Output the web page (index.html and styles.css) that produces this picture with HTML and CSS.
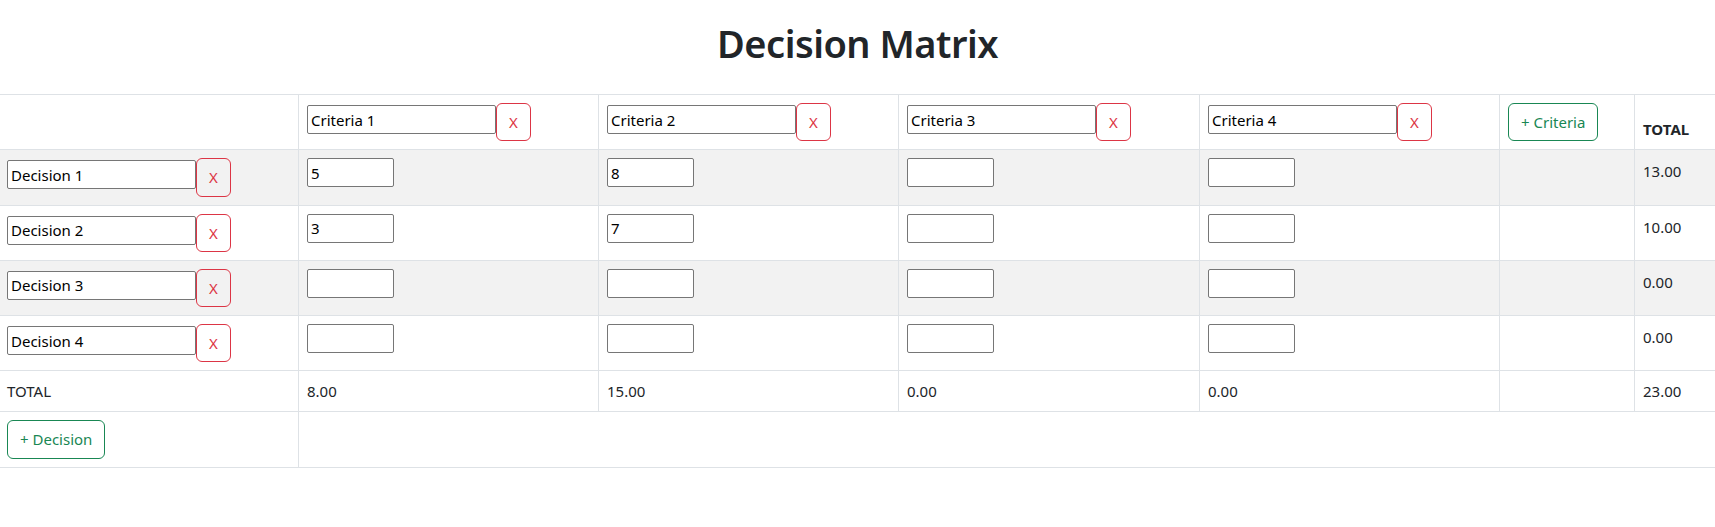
FILE: index.html
```html
<!DOCTYPE html>
<html lang="en">
<head>
<meta charset="utf-8">
<title>Decision Matrix</title>
<link rel="stylesheet" href="styles.css">
</head>
<body>
<h1 class="title">Decision Matrix</h1>
<table class="matrix">
  <colgroup>
    <col class="c-label">
    <col class="c-crit">
    <col class="c-crit">
    <col class="c-crit3">
    <col class="c-crit">
    <col class="c-add">
    <col class="c-total">
  </colgroup>
  <thead>
    <tr>
      <th></th>
      <th><div class="pair"><input class="field name" value="Criteria 1"><button class="btn btn-del">X</button></div></th>
      <th><div class="pair"><input class="field name" value="Criteria 2"><button class="btn btn-del">X</button></div></th>
      <th><div class="pair"><input class="field name" value="Criteria 3"><button class="btn btn-del">X</button></div></th>
      <th><div class="pair"><input class="field name" value="Criteria 4"><button class="btn btn-del">X</button></div></th>
      <th><button class="btn btn-add">+ Criteria</button></th>
      <th class="total-head">TOTAL</th>
    </tr>
  </thead>
  <tbody class="decisions">
    <tr>
      <td><div class="pair"><input class="field name" value="Decision 1"><button class="btn btn-del">X</button></div></td>
      <td><input class="field score" value="5"></td>
      <td><input class="field score" value="8"></td>
      <td><input class="field score" value=""></td>
      <td><input class="field score" value=""></td>
      <td></td>
      <td class="num">13.00</td>
    </tr>
    <tr>
      <td><div class="pair"><input class="field name" value="Decision 2"><button class="btn btn-del">X</button></div></td>
      <td><input class="field score" value="3"></td>
      <td><input class="field score" value="7"></td>
      <td><input class="field score" value=""></td>
      <td><input class="field score" value=""></td>
      <td></td>
      <td class="num">10.00</td>
    </tr>
    <tr>
      <td><div class="pair"><input class="field name" value="Decision 3"><button class="btn btn-del">X</button></div></td>
      <td><input class="field score" value=""></td>
      <td><input class="field score" value=""></td>
      <td><input class="field score" value=""></td>
      <td><input class="field score" value=""></td>
      <td></td>
      <td class="num">0.00</td>
    </tr>
    <tr>
      <td><div class="pair"><input class="field name" value="Decision 4"><button class="btn btn-del">X</button></div></td>
      <td><input class="field score" value=""></td>
      <td><input class="field score" value=""></td>
      <td><input class="field score" value=""></td>
      <td><input class="field score" value=""></td>
      <td></td>
      <td class="num">0.00</td>
    </tr>
  </tbody>
  <tfoot>
    <tr>
      <td>TOTAL</td>
      <td>8.00</td>
      <td>15.00</td>
      <td>0.00</td>
      <td>0.00</td>
      <td></td>
      <td>23.00</td>
    </tr>
    <tr>
      <td><button class="btn btn-add">+ Decision</button></td>
      <td colspan="6"></td>
    </tr>
  </tfoot>
</table>
</body>
</html>
```

FILE: styles.css
```css
* {
  box-sizing: border-box;
}

body {
  margin: 0;
  font-family: "Noto Sans", "Open Sans", sans-serif;
  font-size: 15px;
  line-height: 24px;
  color: #212529;
  background: #fff;
}

.title {
  margin: 0 0 27px;
  padding-top: 19px;
  text-align: center;
  font-size: 38px;
  font-weight: 600;
  letter-spacing: -0.5px;
  line-height: 48px;
  color: #212529;
}

.matrix {
  width: 100%;
  table-layout: fixed;
  border-collapse: separate;
  border-spacing: 0;
  border-top: 1px solid #dee2e6;
}

.c-label { width: 298px; }
.c-crit { width: 300px; }
.c-crit3 { width: 301px; }
.c-add { width: 135px; }
.c-total { width: 81px; }

.matrix th,
.matrix td {
  padding: 8px;
  border-bottom: 1px solid #dee2e6;
  border-left: 1px solid #dee2e6;
  text-align: left;
  vertical-align: top;
}

.matrix th:first-child,
.matrix td:first-child {
  border-left: 0;
  padding-left: 7px;
}

.matrix thead th {
  vertical-align: bottom;
}

.total-head {
  font-weight: 700;
}

.matrix td.num {
  padding-top: 9px;
}

.decisions tr:nth-child(odd) td {
  background: #f2f2f2;
}

.pair {
  display: flex;
  align-items: flex-start;
}

.field {
  display: block;
  height: 29px;
  margin: 0;
  padding: 0 3px;
  border: 1px solid #767676;
  border-radius: 2px;
  background: #fff;
  color: #000;
  font: inherit;
  font-weight: 400;
  line-height: normal;
}

.name {
  width: 189px;
  margin-top: 2px;
}

.score {
  width: 87px;
}

.btn {
  display: inline-block;
  vertical-align: top;
  margin: 0;
  padding: 6px 12px;
  font: inherit;
  font-weight: 400;
  line-height: 24.3px;
  border: 1px solid;
  border-radius: 6px;
  background: transparent;
  cursor: pointer;
}

.btn-add {
  color: #198754;
  border-color: #198754;
}

.btn-del {
  color: #dc3545;
  border-color: #dc3545;
}
```
